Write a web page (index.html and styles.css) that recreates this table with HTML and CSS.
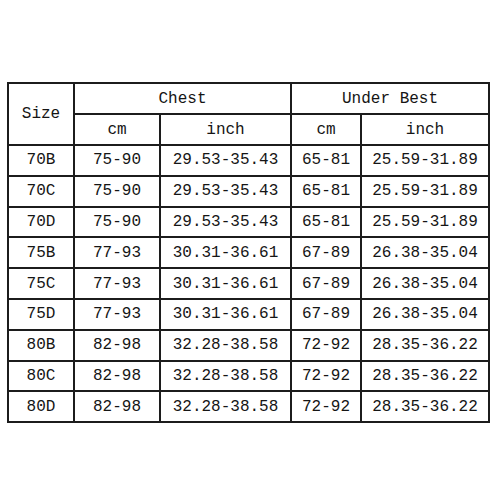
FILE: index.html
```html
<!DOCTYPE html>
<html>
<head>
<meta charset="utf-8">
<link rel="stylesheet" href="styles.css">
</head>
<body>
<table class="size-table">
  <colgroup>
    <col class="c-size">
    <col class="c-cm1">
    <col class="c-in1">
    <col class="c-cm2">
    <col class="c-in2">
  </colgroup>
  <tr class="head1">
    <td rowspan="2">Size</td>
    <td colspan="2">Chest</td>
    <td colspan="2">Under Best</td>
  </tr>
  <tr class="head2">
    <td>cm</td><td>inch</td><td>cm</td><td>inch</td>
  </tr>
  <tr><td>70B</td><td>75-90</td><td>29.53-35.43</td><td>65-81</td><td>25.59-31.89</td></tr>
  <tr><td>70C</td><td>75-90</td><td>29.53-35.43</td><td>65-81</td><td>25.59-31.89</td></tr>
  <tr><td>70D</td><td>75-90</td><td>29.53-35.43</td><td>65-81</td><td>25.59-31.89</td></tr>
  <tr><td>75B</td><td>77-93</td><td>30.31-36.61</td><td>67-89</td><td>26.38-35.04</td></tr>
  <tr><td>75C</td><td>77-93</td><td>30.31-36.61</td><td>67-89</td><td>26.38-35.04</td></tr>
  <tr><td>75D</td><td>77-93</td><td>30.31-36.61</td><td>67-89</td><td>26.38-35.04</td></tr>
  <tr><td>80B</td><td>82-98</td><td>32.28-38.58</td><td>72-92</td><td>28.35-36.22</td></tr>
  <tr><td>80C</td><td>82-98</td><td>32.28-38.58</td><td>72-92</td><td>28.35-36.22</td></tr>
  <tr><td>80D</td><td>82-98</td><td>32.28-38.58</td><td>72-92</td><td>28.35-36.22</td></tr>
</table>
</body>
</html>
```
FILE: styles.css
```css
html, body {
  margin: 0;
  padding: 0;
  background: #ffffff;
}
body {
  padding: 82px 0 0 7px;
}
.size-table {
  border-collapse: collapse;
  table-layout: fixed;
  width: 483px;
  font-family: "Liberation Mono", "DejaVu Sans Mono", monospace;
  font-size: 16px;
  color: #151515;
}
.c-size { width: 66px; }
.c-cm1 { width: 86px; }
.c-in1 { width: 131px; }
.c-cm2 { width: 70px; }
.c-in2 { width: 128px; }
.size-table td {
  border: 2px solid #1c1c1c;
  text-align: center;
  vertical-align: middle;
  padding: 0;
  height: 28.8px;
  line-height: 1;
  white-space: nowrap;
}
.size-table .head1 td,
.size-table .head2 td {
  height: 29px;
}
```
